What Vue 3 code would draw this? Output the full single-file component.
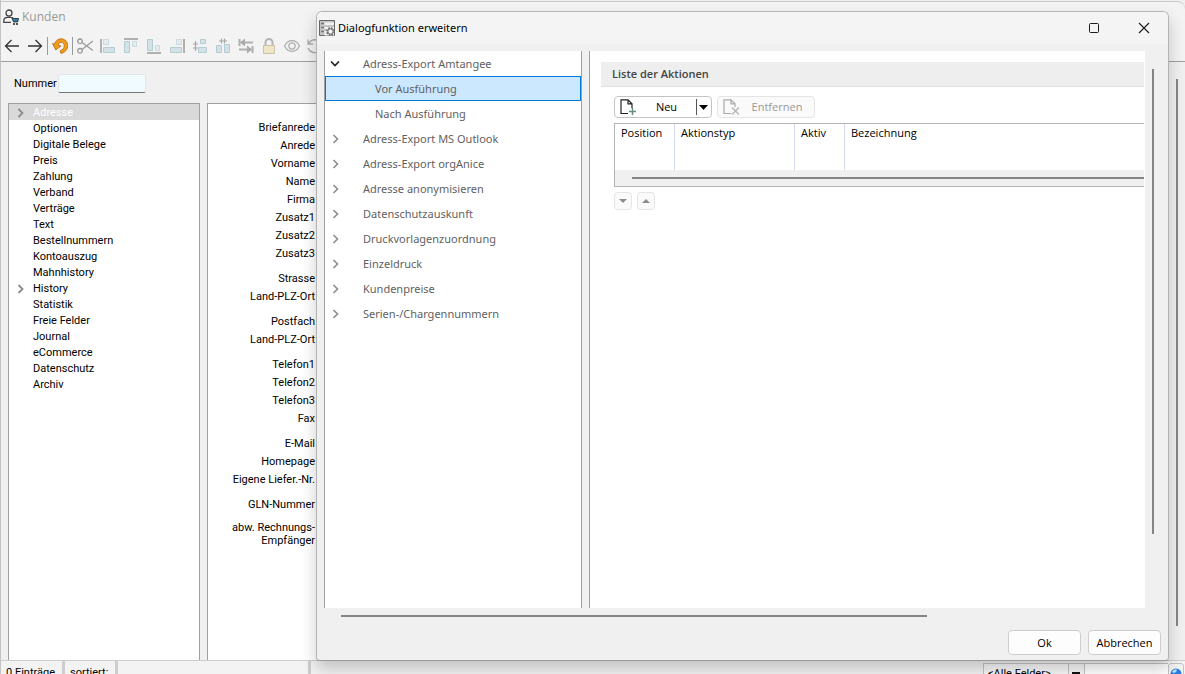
<template>
  <div class="window">
    <header class="titlebar">
      <svg class="app-icon" width="16" height="16" viewBox="0 0 16 16" fill="none">
        <circle cx="6" cy="4" r="3" stroke="#444" stroke-width="1.3" />
        <path d="M8 13.400H.8v-1.500c0-2.200 1.700-3.500 3.700-3.500H8" stroke="#444" stroke-width="1.300" />
        <path d="M8.500 8.500h1.400l.5 1h5.200l-1 3.500h-4z" fill="#2f7fa8" stroke="#222" stroke-width=".8" />
        <circle cx="11" cy="15" r="1" fill="#222" />
        <circle cx="14" cy="15" r="1" fill="#222" />
      </svg>
      <span>Kunden</span>
    </header>

    <nav class="toolbar" aria-label="Werkzeuge">
      <template v-for="tool in tools" :key="tool.label">
        <button type="button" class="tool" :aria-label="tool.label">
          <svg width="16" height="16" viewBox="0 0 16 16" fill="none">
            <path
              v-for="(p, i) in tool.paths"
              :key="i"
              :d="p.d"
              :fill="p.fill || 'none'"
              :stroke="p.stroke || 'none'"
              :stroke-width="p.width || 1"
            />
          </svg>
        </button>
        <span v-if="tool.separator" class="separator"></span>
      </template>
    </nav>

    <div class="client">
      <div class="page">
        <div class="number-row">
          <label for="nummer">Nummer</label>
          <input id="nummer" v-model="nummer" type="text" />
        </div>
        <div class="panels">
          <ul class="nav-tree">
            <li v-for="item in navItems" :key="item.name" :class="{ active: item.name === 'Adresse' }">
              <span class="arrow">
                <svg v-if="item.children" width="7" height="10" viewBox="0 0 7 10" fill="none">
                  <path d="M1.500 1l4 4-4 4" stroke="#8c8c8c" stroke-width="1.800" />
                </svg>
              </span>
              {{ item.name }}
            </li>
          </ul>
          <div class="form-panel">
            <div v-for="(group, i) in formGroups" :key="i" class="form-group">
              <span v-for="(name, j) in group" :key="j">{{ name }}</span>
            </div>
            <div class="form-group tight">
              <span>abw. Rechnungs-</span>
              <span>Empfänger</span>
            </div>
          </div>
        </div>
      </div>
      <div class="page-scroll"><div class="thumb"></div></div>
    </div>

    <footer class="statusbar">
      <span class="cell count">0 Einträge</span>
      <span class="cell sort">sortiert:</span>
      <span class="cell info"></span>
      <div class="search">
        <select v-model="feld" aria-label="Feld">
          <option>&lt;Alle Felder&gt;</option>
        </select>
        <input type="text" aria-label="Suche" />
        <button type="button" aria-label="Suchen">
          <svg width="12" height="12" viewBox="0 0 12 12">
            <circle cx="6" cy="6" r="5.500" fill="#2b7de0" />
            <path d="M2 4c1-2 3-3 5-2L6 4 4 5z" fill="#bfe3ff" />
          </svg>
        </button>
      </div>
    </footer>

    <section class="dialog" role="dialog" aria-labelledby="dialog-title">
      <header class="dialog-title">
        <svg width="16" height="16" viewBox="0 0 16 16" fill="none">
          <path d="M.5.5h15v15H.5z" fill="#c4c4c4" stroke="#666" />
          <path d="M5.500 2.500H15V5H5.500zM5.500 7H15v2H5.500zM5.500 11H15v4.500H5.500z" fill="#f2f2f2" />
          <path d="M2 3.500h3M2 7.500h3M2 11.500h3" stroke="#777" stroke-width="1.500" />
          <circle cx="11.500" cy="11.500" r="3.600" fill="#f5f5f5" stroke="#666" stroke-width="1.600" stroke-dasharray="1.700 1.130" />
          <circle cx="11.500" cy="11.500" r="2.600" fill="#f5f5f5" stroke="#666" />
        </svg>
        <span id="dialog-title">Dialogfunktion erweitern</span>
        <button type="button" aria-label="Maximieren">
          <svg width="12" height="12" viewBox="0 0 12 12" fill="none">
            <rect x="1.500" y="1.500" width="9" height="9" rx="1" stroke="#1a1a1a" />
          </svg>
        </button>
        <button type="button" aria-label="Schließen">
          <svg width="12" height="12" viewBox="0 0 12 12" fill="none">
            <path d="M1 1l10 10M11 1L1 11" stroke="#1a1a1a" stroke-width="1.100" />
          </svg>
        </button>
      </header>

      <div class="dialog-body">
        <ul class="function-tree">
          <li
            v-for="item in functions"
            :key="item.name"
            :class="{ child: item.child, selected: item.name === 'Vor Ausführung' }"
          >
            <span class="arrow">
              <svg v-if="item.open" width="10" height="7" viewBox="0 0 10 7" fill="none">
                <path d="M1 1.500l4 4 4-4" stroke="#222" stroke-width="1.700" />
              </svg>
              <svg v-else-if="!item.child" width="7" height="10" viewBox="0 0 7 10" fill="none">
                <path d="M1.500 1l4 4-4 4" stroke="#8c8c8c" stroke-width="1.600" />
              </svg>
            </span>
            {{ item.name }}
          </li>
        </ul>

        <div class="actions">
          <h2>Liste der Aktionen</h2>
          <div class="action-content">
            <div class="buttons">
              <div class="split">
                <button type="button" class="new">
                  <svg width="17" height="16" viewBox="0 0 17 16" fill="none">
                    <path d="M8 14.500H1V.8h7l4 4V9M8 .8v4h4" stroke="#222" stroke-width="1.200" />
                    <path d="M12.500 9v7M9 12.500h7" stroke="#5f9279" stroke-width="1.500" />
                  </svg>
                  <span>Neu</span>
                </button>
                <button type="button" class="drop" aria-label="Weitere Aktionen">
                  <svg width="9" height="5" viewBox="0 0 9 5"><path d="M0 0h9L4.500 5z" fill="#000" /></svg>
                </button>
              </div>
              <button type="button" class="remove" disabled>
                <svg width="17" height="16" viewBox="0 0 17 16" fill="none">
                  <path d="M8 14.500H1V.8h7l4 4V8M8 .8v4h4" stroke="#aaa" stroke-width="1.200" />
                  <path d="M9 8.500l7 7M16 8.500l-7 7" stroke="#b9b0b0" stroke-width="1.200" />
                </svg>
                <span>Entfernen</span>
              </button>
            </div>
            <div class="grid">
              <table>
                <thead>
                  <tr>
                    <th class="w60">Position</th>
                    <th class="w120">Aktionstyp</th>
                    <th class="w50">Aktiv</th>
                    <th>Bezeichnung</th>
                  </tr>
                </thead>
              </table>
              <div class="grid-scroll"><div class="thumb"></div></div>
            </div>
            <div class="order">
              <button type="button" disabled aria-label="Nach unten">
                <svg width="8" height="4" viewBox="0 0 8 4"><path d="M0 0h8L4 4z" fill="#8c8c8c" /></svg>
              </button>
              <button type="button" disabled aria-label="Nach oben">
                <svg width="8" height="4" viewBox="0 0 8 4"><path d="M0 4h8L4 0z" fill="#8c8c8c" /></svg>
              </button>
            </div>
          </div>
        </div>
        <div class="v-scroll"><div class="thumb"></div></div>
      </div>
      <div class="h-scroll"><div class="thumb"></div></div>

      <footer class="dialog-footer">
        <button type="button">Ok</button>
        <button type="button">Abbrechen</button>
      </footer>
    </section>
  </div>
</template>

<script setup>
import { ref } from 'vue';

const nummer = ref('');
const feld = ref('<Alle Felder>');

const box = { fill: '#d3e2e7', stroke: '#b4cdd5' };
const lightBox = { fill: '#e3ecef', stroke: '#c9dbe1' };
const bar = { stroke: '#b0b0b0', width: 2 };
const thin = { stroke: '#a8a8a8', width: 1.2 };

const tools = [
  { label: 'Zurück', paths: [{ d: 'M15 8H1.500M7.500 2L1.500 8l6 6', stroke: '#333', width: 1.3 }] },
  {
    label: 'Vor',
    separator: true,
    paths: [{ d: 'M1 8h13.500M8.500 2l6 6-6 6', stroke: '#333', width: 1.3 }],
  },
  {
    label: 'Aktualisieren',
    separator: true,
    paths: [
      {
        d: 'M.5 5.500l2 .5C3.500 2.800 6 .8 9 .8c4 0 6.700 3 6.700 6.700 0 4-2.700 7-6.700 8L8 12.800c2.700-.8 4.200-2.600 4.200-5 0-2-1.300-3.500-3.200-3.500-1.500 0-2.500 1-3 2.700l3 1-5.200 4z',
        fill: '#f39a1b',
        stroke: '#b06c10',
        width: 0.8,
      },
    ],
  },
  {
    label: 'Ausschneiden',
    paths: [
      { d: 'M3 1a2.300 2.300 0 1 0 .01 0zM3 10.500a2.300 2.300 0 1 0 .01 0z', stroke: '#999', width: 1.3 },
      { d: 'M5 4.500l11 8M5 11.500L16 3', stroke: '#999', width: 1.3 },
    ],
  },
  {
    label: 'Linksbündig',
    paths: [{ d: 'M1 1v14', ...bar }, { d: 'M3.500 1.500h5v5h-5z', ...lightBox }, { d: 'M3.500 9.500h11v5h-11z', ...box }],
  },
  {
    label: 'Oben ausrichten',
    paths: [{ d: 'M1 1h14', ...bar }, { d: 'M1.500 3.500h5v11h-5z', ...box }, { d: 'M9.500 3.500h4v5h-4z', ...lightBox }],
  },
  {
    label: 'Unten ausrichten',
    paths: [{ d: 'M1 15h14', ...bar }, { d: 'M1.500 1.500h5v11h-5z', ...box }, { d: 'M9.500 7.500h4v5h-4z', ...lightBox }],
  },
  {
    label: 'Rechtsbündig',
    paths: [{ d: 'M15 1v14', ...bar }, { d: 'M7.500 1.500h5v5h-5z', ...lightBox }, { d: 'M1.500 9.500h11v5h-11z', ...box }],
  },
  {
    label: 'Gleiche Höhe',
    paths: [
      { d: 'M3.500 3v10M1 6h5M1 10h5', ...thin },
      { d: 'M8.500 1.500h5v4h-5zM6.500 9.500h8v5h-8z', ...box },
    ],
  },
  {
    label: 'Gleiche Breite',
    paths: [
      { d: 'M4 3h8M6.500.5v5M9.500.5v5', ...thin },
      { d: 'M1.500 7.500h5v7h-5zM9.500 6.500h5v8h-5z', ...box },
    ],
  },
  {
    label: 'Tabulator',
    paths: [
      { d: 'M1.500 1v7M14.500 8v7M3 4.500h12M1 11.500h12', ...bar },
      { d: 'M2 4.500l5-4v8zM14 11.500l-5-4v8z', fill: '#aaa' },
    ],
  },
  {
    label: 'Sperren',
    paths: [
      { d: 'M4.500 8V4.500a3.500 3.500 0 0 1 7 0V8', stroke: '#b4b4b4', width: 2 },
      { d: 'M2.500 7.500h11v8h-11z', fill: '#eee6c4', stroke: '#c9c3ab' },
    ],
  },
  {
    label: 'Ansicht',
    paths: [
      { d: 'M.5 8C4 .8 12 .8 15.500 8 12 15.200 4 15.200.5 8z', stroke: '#aaa', width: 1.2 },
      { d: 'M8 4.800a3.200 3.200 0 1 0 .01 0z', stroke: '#aaa', width: 1.2 },
    ],
  },
  {
    label: 'Rückgängig',
    paths: [{ d: 'M1 1.500v4.500h5M1.500 6C4 .5 11 .5 13.500 5M1 10c2 5 8 6 11 3', stroke: '#aaa', width: 1.3 }],
  },
];

const navItems = [
  { name: 'Adresse', children: true },
  { name: 'Optionen' },
  { name: 'Digitale Belege' },
  { name: 'Preis' },
  { name: 'Zahlung' },
  { name: 'Verband' },
  { name: 'Verträge' },
  { name: 'Text' },
  { name: 'Bestellnummern' },
  { name: 'Kontoauszug' },
  { name: 'Mahnhistory' },
  { name: 'History', children: true },
  { name: 'Statistik' },
  { name: 'Freie Felder' },
  { name: 'Journal' },
  { name: 'eCommerce' },
  { name: 'Datenschutz' },
  { name: 'Archiv' },
];

const formGroups = [
  ['Briefanrede', 'Anrede', 'Vorname', 'Name', 'Firma', 'Zusatz1', 'Zusatz2', 'Zusatz3'],
  ['Strasse', 'Land-PLZ-Ort'],
  ['Postfach', 'Land-PLZ-Ort'],
  ['Telefon1', 'Telefon2', 'Telefon3', 'Fax'],
  ['E-Mail', 'Homepage', 'Eigene Liefer.-Nr.'],
  ['GLN-Nummer'],
];

const functions = [
  { name: 'Adress-Export Amtangee', open: true },
  { name: 'Vor Ausführung', child: true },
  { name: 'Nach Ausführung', child: true },
  { name: 'Adress-Export MS Outlook' },
  { name: 'Adress-Export orgAnice' },
  { name: 'Adresse anonymisieren' },
  { name: 'Datenschutzauskunft' },
  { name: 'Druckvorlagenzuordnung' },
  { name: 'Einzeldruck' },
  { name: 'Kundenpreise' },
  { name: 'Serien-/Chargennummern' },
];
</script>

<style>
body {
  margin: 0;
  background: #f3f3f3;
}
</style>

<style scoped>
* {
  box-sizing: border-box;
}

ul {
  margin: 0;
  padding: 0;
  list-style: none;
}

svg {
  display: block;
  flex: none;
}

button {
  padding: 0;
  border: 0;
  background: none;
  color: inherit;
  font: inherit;
}

.window {
  position: relative;
  display: flex;
  flex-direction: column;
  height: 100vh;
  overflow: hidden;
  border-left: 1px solid #c3c3c3;
  background: #f0f0f0;
  color: #000;
  font: 11px/16px Roboto, "Liberation Sans", sans-serif;
}

.titlebar {
  display: flex;
  flex: none;
  align-items: center;
  gap: 3px;
  height: 30px;
  margin-top: 1px;
  padding-left: 2px;
  border-top: 1px solid #c9c9c9;
  border-radius: 0 8px 0 0;
  background: #f3f3f3;
  color: #999;
  font: 12px/16px "Open Sans", "Noto Sans", sans-serif;
}

.toolbar {
  display: flex;
  align-items: center;
  flex: none;
  height: 31px;
  border-bottom: 1px solid #a0a0a0;
  background: #f3f3f3;
}

.tool {
  display: flex;
  flex: none;
  width: 23px;
  padding-left: 3px;
}

.separator {
  width: 1px;
  height: 18px;
  margin-right: 1px;
  background: #999;
}

.client {
  display: flex;
  flex: 1;
  min-height: 0;
}

.page {
  display: flex;
  flex: 1;
  flex-direction: column;
  padding: 0 12px 0 7px;
}

.number-row {
  display: flex;
  align-items: center;
  height: 41px;
  padding: 2px 0 0 6px;
}

.number-row label {
  width: 44px;
}

.number-row input {
  width: 88px;
  height: 19px;
  border: 1px solid #e5e5e5;
  border-bottom-color: #777;
  border-radius: 2px;
  background: #f0fbff;
  font: inherit;
}

.panels {
  display: flex;
  flex: 1;
  gap: 7px;
  min-height: 0;
}

.nav-tree,
.form-panel {
  border: 1px solid #a0a0a0;
  border-bottom: 0;
  background: #fff;
}

.nav-tree {
  width: 192px;
}

.nav-tree li {
  display: flex;
  align-items: center;
  padding-top: 2px;
  line-height: 14px;
}

.nav-tree .arrow {
  display: flex;
  width: 24px;
  padding-left: 8px;
}

.nav-tree .active {
  background: #d9d9d9;
  color: #fff;
}

.form-panel {
  flex: 1;
  padding-top: 15px;
}

.form-group {
  display: flex;
  flex-direction: column;
  width: 107px;
  margin-bottom: 7px;
  line-height: 18px;
  text-align: right;
}

.tight {
  line-height: 13px;
}

.page-scroll {
  width: 9px;
  padding: 17px 0 34px;
}

.thumb {
  height: 100%;
  background: #858585;
}

.page-scroll .thumb {
  width: 2px;
}

.statusbar {
  display: flex;
  flex: none;
  height: 14px;
  overflow: hidden;
  border-top: 1px solid #cdcdcd;
  background: #f3f3f3;
}

.cell {
  height: 24px;
  padding-left: 5px;
  border-right: 3px solid #cdcdcd;
  line-height: 24px;
  white-space: nowrap;
}

.count {
  width: 64px;
}

.sort {
  width: 53px;
}

.info {
  width: 193px;
}

.search {
  display: flex;
  width: 201px;
  height: 20px;
  margin: 2px 1px 0 auto;
  border-left: 1px solid #c3c3c3;
}

.search select {
  width: 101px;
  padding: 0 4px;
  border: 0;
  border-top: 1px solid #c3c3c3;
  border-right: 1px solid #c3c3c3;
  border-radius: 0;
  appearance: none;
  background:
    linear-gradient(#111, #111) 88px 8px / 8px 2px no-repeat,
    linear-gradient(#c3c3c3, #c3c3c3) 84px 0 / 1px 20px no-repeat,
    #f7f7f7;
  font: inherit;
}

.search input {
  width: 83px;
  border: 0;
  border-top: 1px solid #c3c3c3;
}

.search button {
  display: flex;
  justify-content: center;
  width: 16px;
  padding-top: 4px;
  border: 1px solid #c3c3c3;
  border-radius: 3px;
}

.dialog {
  position: absolute;
  inset: 11px 16px 13px 315px;
  display: flex;
  flex-direction: column;
  overflow: hidden;
  border: 1px solid #b4b4b4;
  border-bottom-color: #999;
  border-radius: 6px 6px 4px 4px;
  background: #f0f0f0;
  box-shadow: 0 8px 16px rgba(0, 0, 0, 0.2);
  font: 11px/16px "Open Sans", "Noto Sans", sans-serif;
}

.dialog-title {
  display: flex;
  align-items: center;
  gap: 3px;
  height: 32px;
  padding: 0 1px 0 2px;
  background: #f4f4f4;
  font-family: "Noto Sans", "Open Sans", sans-serif;
}

.dialog-title span {
  flex: 1;
}

.dialog-title button {
  display: flex;
  justify-content: center;
  width: 47px;
}

.dialog-body {
  display: flex;
  flex: 1;
  min-height: 0;
  padding: 7px 0 0 7px;
}

.function-tree {
  flex: none;
  width: 258px;
  margin-right: 7px;
  border: solid #a0a0a0;
  border-width: 0 1px;
  background: #fff;
  color: #5f5f5f;
  font-family: "Noto Sans", "Open Sans", sans-serif;
}

.function-tree li {
  display: flex;
  align-items: center;
  height: 25px;
}

.function-tree .arrow {
  display: flex;
  justify-content: center;
  width: 20px;
  margin-right: 18px;
}

.function-tree .child .arrow {
  margin-right: 30px;
}

.function-tree .selected {
  outline: 1px solid #0078d7;
  outline-offset: -1px;
  background: #cce8ff;
}

.actions {
  flex: 1;
  min-width: 0;
  padding: 11px 1px 0 11px;
  border-left: 1px solid #a0a0a0;
  background: #fff;
}

.actions h2 {
  margin: 0 0 9px;
  padding: 4px 11px;
  border-bottom: 1px solid #e0e0e0;
  background: #eee;
  color: #444;
  font-size: 11px;
  font-weight: 600;
  line-height: 16px;
}

.action-content {
  padding-left: 13px;
}

.buttons {
  display: flex;
  gap: 5px;
  margin-bottom: 5px;
}

.split,
.remove {
  display: flex;
  align-items: center;
  width: 98px;
  height: 22px;
  border: 1px solid #c4c4c4;
  border-radius: 4px;
  background: #fff;
}

.new {
  display: flex;
  flex: 1;
  padding-left: 5px;
}

.new span {
  flex: 1;
}

.drop {
  display: flex;
  align-items: center;
  width: 15px;
  height: 16px;
  padding-left: 2px;
  border-left: 1px solid #555;
}

.remove {
  padding-left: 5px;
  border-color: #e5e5e5;
  background: #fafafa;
  color: #999;
}

.remove span {
  flex: 1;
}

.grid {
  border: 1px solid #b4b4b4;
  border-right: 0;
}

table {
  width: 100%;
  height: 46px;
  border-spacing: 0;
  table-layout: fixed;
}

th {
  padding: 1px 6px;
  border-right: 1px solid #d5dbee;
  font-weight: normal;
  text-align: left;
  vertical-align: top;
}

th:last-child {
  border-right: 0;
}

.w60 {
  width: 60px;
}

.w120 {
  width: 120px;
}

.w50 {
  width: 50px;
}

.grid-scroll {
  height: 16px;
  padding: 7px 0 7px 17px;
  background: #f0f0f0;
}

.order {
  display: flex;
  gap: 5px;
  margin-top: 5px;
}

.order button {
  display: flex;
  align-items: center;
  justify-content: center;
  width: 18px;
  height: 18px;
  border: 1px solid #e5e5e5;
  border-radius: 4px;
  background: #fafafa;
}

.v-scroll {
  width: 23px;
  padding: 18px 14px 74px 7px;
}

.h-scroll {
  flex: none;
  height: 16px;
  padding: 7px 241px 7px 24px;
}

.dialog-footer {
  display: flex;
  flex: none;
  justify-content: flex-end;
  gap: 7px;
  padding: 6px 7px 5px;
}

.dialog-footer button {
  width: 73px;
  height: 25px;
  border: 1px solid #cdcdcd;
  border-radius: 4px;
  background: #fdfdfd;
}
</style>
